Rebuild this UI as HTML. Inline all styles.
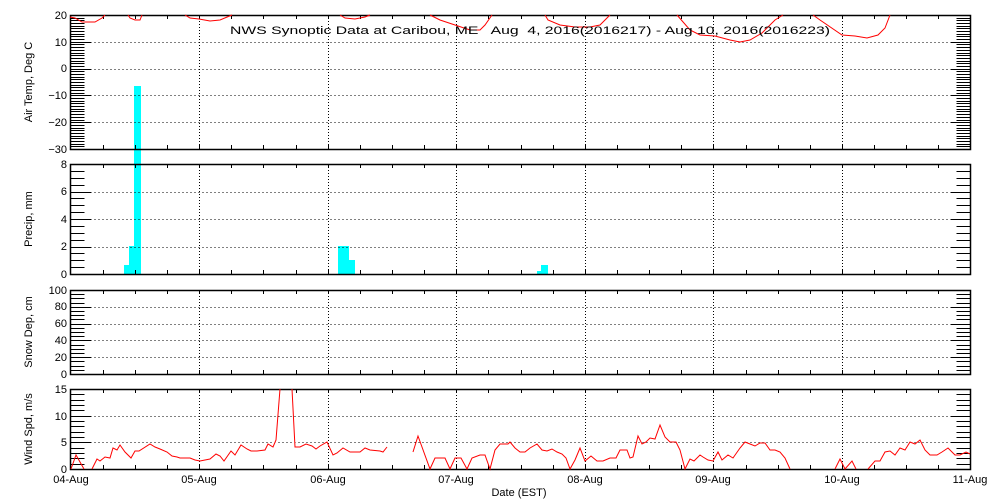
<!DOCTYPE html>
<html><head><meta charset="utf-8"><style>
html,body{margin:0;padding:0;background:#fff;width:1000px;height:500px;overflow:hidden}
svg{display:block}
text{font-family:"Liberation Sans",sans-serif;font-size:11px;fill:#000}
</style></head><body>
<svg id="s" width="1000" height="500" xmlns="http://www.w3.org/2000/svg">
<g id="g"></g>
<text x="230" y="34" font-size="13" style="white-space:pre" xml:space="preserve" textLength="600" lengthAdjust="spacingAndGlyphs">NWS Synoptic Data at Caribou, ME   Aug  4, 2016(2016217) - Aug 10, 2016(2016223)</text>
<g text-anchor="end" font-size="12">
<text x="67" y="19">20</text><text x="67" y="46">10</text><text x="67" y="72">0</text><text x="67" y="99">−10</text><text x="67" y="126">−20</text><text x="67" y="153">−30</text>
<text x="67" y="168">8</text><text x="67" y="195">6</text><text x="67" y="223">4</text><text x="67" y="250">2</text><text x="67" y="278">0</text>
<text x="67" y="294">100</text><text x="67" y="310">80</text><text x="67" y="327">60</text><text x="67" y="344">40</text><text x="67" y="361">20</text><text x="67" y="378">0</text>
<text x="67" y="393">15</text><text x="67" y="420">10</text><text x="67" y="446">5</text><text x="67" y="473">0</text>
</g>
<g text-anchor="middle">
<text transform="translate(32,82) rotate(-90)" font-size="12">Air Temp, Deg C</text>
<text transform="translate(32,219) rotate(-90)" font-size="12">Precip, mm</text>
<text transform="translate(32,332) rotate(-90)" font-size="12">Snow Dep, cm</text>
<text transform="translate(32,429) rotate(-90)" font-size="12">Wind Spd, m/s</text>
<text x="71" y="483">04-Aug</text><text x="199" y="483">05-Aug</text><text x="328" y="483">06-Aug</text><text x="456" y="483">07-Aug</text><text x="585" y="483">08-Aug</text><text x="713" y="483">09-Aug</text><text x="842" y="483">10-Aug</text><text x="970" y="483">11-Aug</text>
<text x="519" y="496" font-size="12">Date (EST)</text>
</g>
</svg>
<script>
var g=document.getElementById('g'),h='';
function L(x1,y1,x2,y2,st){h+='<line x1="'+x1+'" y1="'+y1+'" x2="'+x2+'" y2="'+y2+'" stroke="#000" stroke-width="1" '+(st||'')+'/>';}
function R(x,y,w,hh){h+='<rect x="'+x+'" y="'+y+'" width="'+w+'" height="'+hh+'" fill="#00ffff"/>';}
var X0=70.5,X1=970.5,D=(X1-X0)/7;
var P=[[15,149,-30,20,1,10],[164,274,0,8,0.5,2],[290,374,0,100,5,20],[389,469,0,15,1,5]];
R(124,265,5,9);R(129,246,5,28);R(134,86,7,188);
R(338,246,11,28);R(349,260,6,14);R(537,271,4,3);R(541,265,7,9);
P.forEach(function(p){var t=p[0],b=p[1],lo=p[2],hi=p[3];
 for(var d=1;d<7;d++){var x=Math.round(X0+d*D)+0.5;L(x,t,x,b,'stroke-dasharray="1,2"');}
 for(var v=lo+p[5];v<hi;v+=p[5]){var y=Math.round(b-(v-lo)/(hi-lo)*(b-t))+0.5;L(X0,y,X1,y,'stroke-dasharray="1,3"');}
 for(var v=lo;v<=hi+1e-6;v+=p[4]){var y=Math.round(b-(v-lo)/(hi-lo)*(b-t))+0.5;
   var maj=Math.abs((v-lo)/p[5]-Math.round((v-lo)/p[5]))<1e-6;var l=maj?20:14;
   L(X0,y,X0+l,y);L(X1-l,y,X1,y);}
 for(var k=1;k<28;k++){var x=Math.round(X0+k*D/4)+0.5;L(x,t,x,t+4);L(x,b-4,x,b);}
 h+='<rect x="'+X0+'" y="'+(t+0.5)+'" width="'+(X1-X0)+'" height="'+(b-t)+'" fill="none" stroke="#000" stroke-width="1.5"/>';
});
function PL(a){h+='<polyline fill="none" stroke="#ff0000" stroke-width="1" points="'+a.join(' ')+'"/>';}
PL([70,17,75,18,82,22,95,22,102,18,105,15]);
PL([128,15,130,18,135,20,140,20,142,15]);
PL([185,15,190,18,199,19,210,21,220,20,232,15]);
PL([340,15,345,18,355,19,365,17,370,15]);
PL([430,15,440,20,455,25,470,30,480,30,485,25,492,15]);
PL([545,15,548,20,560,25,575,27,590,27,600,25,610,15]);
PL([677,15,690,30,700,35,715,36,730,40,740,42,750,40,762,33,775,20,783,15]);
PL([813,15,820,20,842,35,855,36,867,38,878,35,885,28,890,15]);
PL([71,469,76,455,80,462,84,469]);
PL([92,469,97,459,100,461,105,457,110,458,113,448,117,450,120,445,125,452,131,458,135,451,139,451,150,444,155,447,160,449,167,452,172,456,177,457,180,458,190,458,195,460,200,461,210,459,216,454,220,456,224,461,231,451,235,455,241,445,247,449,251,451,257,451,265,450,268,444,273,447,276,440,280,389]);
PL([292,389,295,447,300,447,306,444,312,446,316,449,320,446,327,442,333,455,337,453,343,448,350,452,360,452,365,448,370,450,380,451,383,452,387,447]);
PL([413,452,418,436,430,469,435,458,445,458,450,469,455,458,461,458,467,469,472,458,480,455,485,455,490,469,495,450,500,444,508,444,510,442,515,448,520,452,525,452,530,448,537,444,542,450,547,451,552,449,557,452,562,454,566,458,570,469,575,460,580,448,585,461,591,456,597,461,603,461,610,458,616,458,620,450,627,450,630,458,633,457,638,436,642,444,646,442,650,438,655,439,660,425,665,437,670,442,676,442,680,450,685,469,690,459,694,461,700,455,703,457,708,460,713,461,718,452,722,460,728,455,733,458,740,448,745,442,750,444,755,446,760,443,765,443,770,450,775,450,780,452,785,458,790,469]);
PL([835,469,840,459,845,469,852,461,856,469]);
PL([868,469,875,461,880,461,885,452,890,451,895,455,900,448,905,450,910,442,915,444,920,440,925,450,930,455,937,455,942,452,948,448,955,455,960,455,966,452,970,454]);
g.innerHTML=h;
</script>
</body></html>
